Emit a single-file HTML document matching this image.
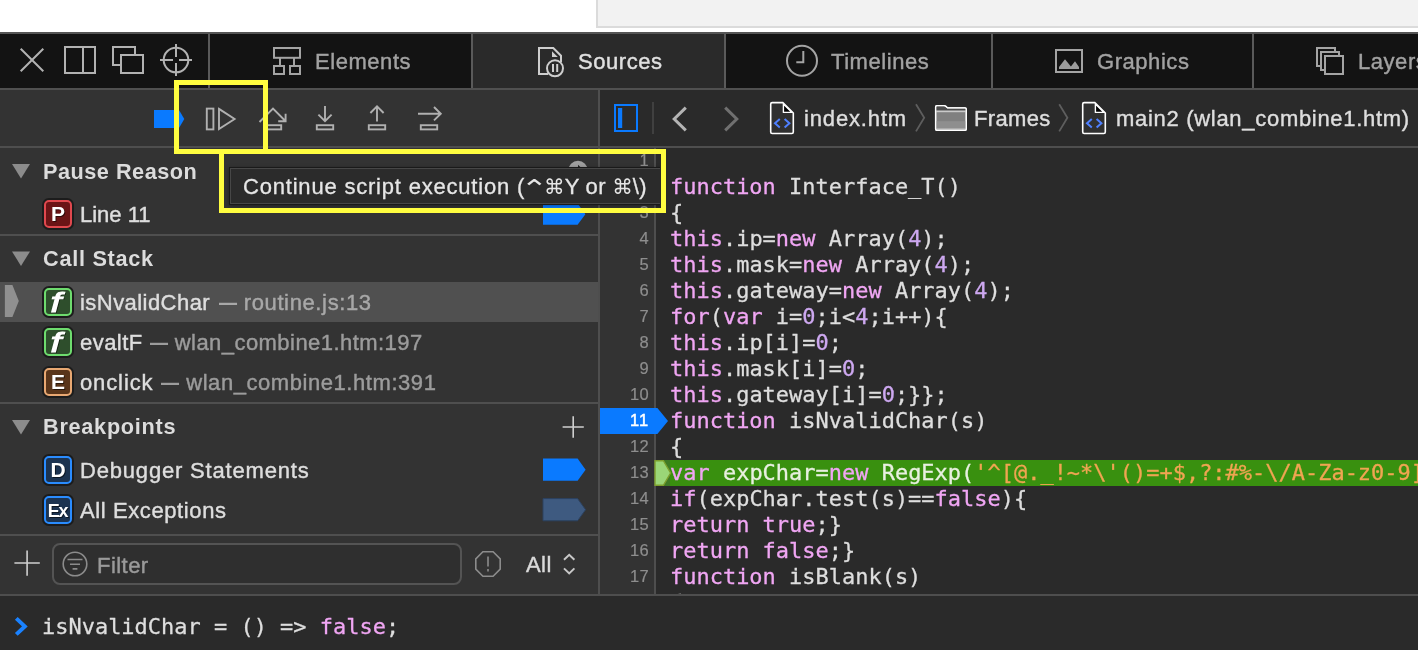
<!DOCTYPE html>
<html lang="en">
<head>
<meta charset="utf-8">
<title>Web Inspector</title>
<style>
html,body{margin:0;padding:0;}
body{width:1418px;height:650px;overflow:hidden;background:#fff;position:relative;font-family:"Liberation Sans",sans-serif;color:#dcdcdc;}
.abs{position:absolute;}
#topgray{left:596px;top:-2px;width:830px;height:26px;background:#f2f2f2;border:2px solid #dbdbdb;box-sizing:content-box;}
#dev{left:0;top:32px;width:1418px;height:618px;background:#333;}
#devtop{left:0;top:0;width:1418px;height:2px;background:#555;}
#tabbar{left:0;top:2px;width:1418px;height:54px;background:#131313;}
#tabline{left:0;top:56px;width:1418px;height:2px;background:#505050;}
.vdiv{top:0;width:2px;height:54px;background:#5a5a5a;}
.tabtxt{top:0;height:54px;line-height:56.8px;font-size:22px;color:#a2a2a2;letter-spacing:0.55px;-webkit-text-stroke:0.4px;white-space:nowrap;}
#srcTab{left:473px;top:0;width:252px;height:54px;background:#2a2a2a;}
svg{position:absolute;overflow:visible;}
.ic{fill:none;stroke:#b2b2b2;stroke-width:2;}
.tabtxt,.crumb,.hdr,.row,.ln,.code,#tip,.badge{will-change:transform;}
/* nav row */
#navL{left:0;top:58px;width:598px;height:56px;background:#333;}
#navR{left:600px;top:58px;width:818px;height:56px;background:#2a2a2a;}
#navline{left:0;top:114px;width:1418px;height:2px;background:#4e4e4e;}
#sidediv{left:598px;top:58px;width:2px;height:506px;background:#4e4e4e;}
.crumb{top:58px;height:56px;line-height:57px;font-size:22px;color:#dedede;letter-spacing:0.7px;-webkit-text-stroke:0.4px;white-space:nowrap;}
/* sidebar */
#side{left:0;top:116px;width:598px;height:446px;background:#333;}
.hdr{left:43px;font-weight:bold;font-size:21.7px;color:#dcdcdc;letter-spacing:0.72px;height:30px;line-height:31px;white-space:nowrap;}
.row{left:80px;font-size:22px;color:#dedede;letter-spacing:0.45px;-webkit-text-stroke:0.42px;height:40px;line-height:41.6px;white-space:nowrap;}
.row .sub{color:#9c9c9c;}
.row .d{display:inline-block;font-weight:bold;-webkit-text-stroke:0;width:18.4px;transform:scaleX(0.82);transform-origin:0 50%;margin-left:0.6px;}
.hline{left:0;width:598px;height:2px;background:#4f4f4f;}
.badge{left:44px;width:28px;height:28px;border-radius:5px;box-sizing:border-box;border:2px solid;box-shadow:0 0 0 2px #1c1c1c;text-align:center;color:#fff;font-weight:bold;font-size:21px;line-height:24px;letter-spacing:0;text-shadow:1px 1px 0 rgba(0,0,0,.55);}

.badge.bP{border-color:#e0484e;background:#6b1416;}
.badge.bF{border-color:#6edc6e;background:#2e4e2c;}
.badge.bE{border-color:#e8a872;background:#59351a;}
.badge.bD{border-color:#2a8cff;background:#1c3350;}
.badge i{font-size:26px;font-style:italic;font-weight:normal;-webkit-text-stroke:0.9px;display:inline-block;transform:translate(-1.6px,1px) scale(1.5,1.04);}
/* editor */
#gutter{left:600px;top:116px;width:55px;height:446px;background:#333;}
#gutline{left:654.2px;top:116px;width:1.8px;height:446px;background:#4e4e4e;}
#editor{left:656px;top:116px;width:762px;height:446px;background:#2a2a2a;}
.ln{left:600px;width:49px;text-align:right;font-size:16.5px;color:#8e8e8e;height:26px;line-height:25.8px;letter-spacing:0.3px;-webkit-text-stroke:0.2px;}
.code{left:671px;height:26px;line-height:25.4px;-webkit-text-stroke:0.3px;font-family:"DejaVu Sans Mono","Liberation Mono",monospace;font-size:21.95px;letter-spacing:0.02px;color:#dedede;white-space:pre;}
.k{color:#f0a6f3;}
.n{color:#cda8f0;}
.s{color:#f0a552;}

.ln.bp{color:#fff;-webkit-text-stroke:0.45px;letter-spacing:1.2px;width:49.5px;z-index:3;}
.w{color:#e8f0e0;}
#tip{left:229px;top:167px;width:440px;height:37.5px;box-sizing:border-box;border:1px solid #1a1a1a;background:#2b2b2b;box-shadow:inset 0 0 0 1px #474747,0 1px 4px rgba(0,0,0,.35);font-size:22px;line-height:37px;color:#e6e6e6;padding-left:13px;letter-spacing:0.62px;-webkit-text-stroke:0.3px;white-space:nowrap;overflow:hidden;}
#tip .t1{letter-spacing:0.8px;}
#tip .t2{letter-spacing:0.3px;}
#tip .sym{font-family:"DejaVu Sans",sans-serif;font-size:20.6px;letter-spacing:0;-webkit-text-stroke:0;}
#tip .ctl{display:inline-block;transform:translate(0px,2px) scale(1.5,1.12);transform-origin:50% 50%;margin:0 0.5px 0 0.5px;font-size:22px;}
.ybox{box-sizing:border-box;border:5.6px solid #fffd40;}
/* console */
#conline{left:0;top:562px;width:1418px;height:2px;background:#4e4e4e;}
#console{left:0;top:564px;width:1418px;height:54px;background:#2a2a2a;}
</style>
</head>
<body>
<div id="topgray" class="abs"></div>
<div id="dev" class="abs">
  <div id="devtop" class="abs"></div>
  <div id="tabbar" class="abs">
    <div id="srcTab" class="abs"></div>
    <div class="abs vdiv" style="left:208px"></div>
    <div class="abs vdiv" style="left:471px"></div>
    <div class="abs vdiv" style="left:724px"></div>
    <div class="abs vdiv" style="left:991px"></div>
    <div class="abs vdiv" style="left:1252px"></div>
    <div class="abs tabtxt" style="left:315px">Elements</div>
    <div class="abs tabtxt" style="left:578px;color:#e0e0e0">Sources</div>
    <div class="abs tabtxt" style="left:831px">Timelines</div>
    <div class="abs tabtxt" style="left:1097px">Graphics</div>
    <div class="abs tabtxt" style="left:1358px">Layers</div>
  </div>
  <div id="tabline" class="abs"></div>
  <div id="navL" class="abs"></div>
  <div id="navR" class="abs"></div>
  <div id="navline" class="abs"></div>
  <div class="abs crumb" style="left:804px;letter-spacing:0.85px">index.htm</div>
  <div class="abs crumb" style="left:973.5px;letter-spacing:0.35px">Frames</div>
  <div class="abs crumb" style="left:1116px">main2 (wlan_combine1.htm)</div>
  <div id="side" class="abs"></div>

  <!-- sidebar content -->
  <div class="abs" id="selrow" style="left:0;top:250px;width:598px;height:40px;background:#505050"></div>
  <div class="abs hline" style="top:202px"></div>
  <div class="abs hline" style="top:370px"></div>
  <div class="abs hline" style="top:502px"></div>
  <div class="abs hdr" style="top:124px;letter-spacing:0.5px">Pause Reason</div>
  <div class="abs hdr" style="top:211px">Call Stack</div>
  <div class="abs hdr" style="top:379px">Breakpoints</div>

  <div class="abs badge bP" style="top:168px">P</div>
  <div class="abs row" style="top:162px;letter-spacing:0px">Line 11</div>

  <div class="abs badge bF" style="top:256px"><i>f</i></div>
  <div class="abs row" style="top:250px">isNvalidChar <span class="sub" style="color:#a8a8a8;letter-spacing:0.63px;margin-left:1.3px"><b class="d">—</b> routine.js:13</span></div>
  <div class="abs badge bF" style="top:296px"><i>f</i></div>
  <div class="abs row" style="top:290px">evaltF <span class="sub"><b class="d">—</b> wlan_combine1.htm:197</span></div>
  <div class="abs badge bE" style="top:336px">E</div>
  <div class="abs row" style="top:330px"><span style="letter-spacing:0.88px">onclick</span> <span class="sub" style="letter-spacing:0.56px;margin-left:0.6px"><b class="d">—</b> wlan_combine1.htm:391</span></div>

  <div class="abs badge bD" style="top:424px">D</div>
  <div class="abs row" style="top:418px;letter-spacing:0.82px">Debugger Statements</div>
  <div class="abs badge bD" style="top:464px"><span style="letter-spacing:-1.2px;font-size:18px;margin-left:-1px">Ex</span></div>
  <div class="abs row" style="top:458px;letter-spacing:0.6px">All Exceptions</div>

  <div class="abs" id="filter" style="left:52px;top:511px;width:410px;height:42px;box-sizing:border-box;border:2px solid #545454;border-radius:8px;background:#2f2f2f"></div>
  <div class="abs row" style="left:97px;top:513px;color:#9a9a9a">Filter</div>
  <div class="abs row" style="left:526px;top:511.5px;color:#dadada">All</div>
  <div id="gutter" class="abs"></div>
  <div id="gutline" class="abs"></div>
  <div id="editor" class="abs"></div>
  <div id="edwrap" class="abs" style="left:600px;top:116px;width:818px;height:446px;overflow:hidden">
   <div class="abs" style="left:55px;top:312px;width:16px;height:26px;background:#3f7a24"></div>
   <div class="abs" style="left:70px;top:312px;width:748px;height:26px;background:#39900f"></div>
   <div class="abs ln" style="left:0;top:0px">1</div>
   <div class="abs ln" style="left:0;top:26px">2</div>
   <div class="abs code" style="left:70.2px;top:26px"><span class="k">function</span> Interface_T()</div>
   <div class="abs ln" style="left:0;top:52px">3</div>
   <div class="abs code" style="left:70.2px;top:52px">{</div>
   <div class="abs ln" style="left:0;top:78px">4</div>
   <div class="abs code" style="left:70.2px;top:78px"><span class="k">this</span>.ip=<span class="k">new</span> Array(<span class="n">4</span>);</div>
   <div class="abs ln" style="left:0;top:104px">5</div>
   <div class="abs code" style="left:70.2px;top:104px"><span class="k">this</span>.mask=<span class="k">new</span> Array(<span class="n">4</span>);</div>
   <div class="abs ln" style="left:0;top:130px">6</div>
   <div class="abs code" style="left:70.2px;top:130px"><span class="k">this</span>.gateway=<span class="k">new</span> Array(<span class="n">4</span>);</div>
   <div class="abs ln" style="left:0;top:156px">7</div>
   <div class="abs code" style="left:70.2px;top:156px"><span class="k">for</span>(<span class="k">var</span> i=<span class="n">0</span>;i&lt;<span class="n">4</span>;i++){</div>
   <div class="abs ln" style="left:0;top:182px">8</div>
   <div class="abs code" style="left:70.2px;top:182px"><span class="k">this</span>.ip[i]=<span class="n">0</span>;</div>
   <div class="abs ln" style="left:0;top:208px">9</div>
   <div class="abs code" style="left:70.2px;top:208px"><span class="k">this</span>.mask[i]=<span class="n">0</span>;</div>
   <div class="abs ln" style="left:0;top:234px">10</div>
   <div class="abs code" style="left:70.2px;top:234px"><span class="k">this</span>.gateway[i]=<span class="n">0</span>;}};</div>
   <div class="abs ln bp" style="left:0;top:260px">11</div>
   <div class="abs code" style="left:70.2px;top:260px"><span class="k">function</span> isNvalidChar(s)</div>
   <div class="abs ln" style="left:0;top:286px">12</div>
   <div class="abs code" style="left:70.2px;top:286px">{</div>
   <div class="abs ln" style="left:0;top:312px">13</div>
   <div class="abs code" style="left:70.2px;top:312px"><span class="k">var</span> <span class="w">expChar=</span><span class="k">new</span> <span class="w">RegExp(</span><span class="s">'^[@._!~*\'()=+$,?:#%-\/A-Za-z0-9]+$'</span><span class="w">);</span></div>
   <div class="abs ln" style="left:0;top:338px">14</div>
   <div class="abs code" style="left:70.2px;top:338px"><span class="k">if</span>(expChar.test(s)==<span class="k">false</span>){</div>
   <div class="abs ln" style="left:0;top:364px">15</div>
   <div class="abs code" style="left:70.2px;top:364px"><span class="k">return</span> <span class="k">true</span>;}</div>
   <div class="abs ln" style="left:0;top:390px">16</div>
   <div class="abs code" style="left:70.2px;top:390px"><span class="k">return</span> <span class="k">false</span>;}</div>
   <div class="abs ln" style="left:0;top:416px">17</div>
   <div class="abs code" style="left:70.2px;top:416px"><span class="k">function</span> isBlank(s)</div>
   <div class="abs ln" style="left:0;top:442px">18</div>
   <div class="abs code" style="left:70.2px;top:442px">{</div>
  </div>
  <div id="sidediv" class="abs"></div>
  <div id="conline" class="abs"></div>
  <div id="console" class="abs"></div>
  <div class="abs code" style="left:42px;top:581.9px">isNvalidChar = () =&gt; <span class="k">false</span>;</div>
</div>
<svg id="icons" class="abs" style="left:0;top:0" width="1418" height="650" viewBox="0 0 1418 650">
 <!-- close / dock / detach / inspect -->
 <g class="ic" stroke="#b2b2b2">
  <path d="M20.7 48.7 L43.3 71.3 M43.3 48.7 L20.7 71.3"/>
  <rect x="65" y="47" width="30" height="26"/><path d="M83 47 V73"/>
  <path d="M135 54 V47 H113 V65 H120"/><rect x="121" y="55" width="22" height="18"/>
  <circle cx="176" cy="60" r="12.3"/><path d="M160 60 H173 M179 60 H192 M176 44 V57 M176 63 V76"/>
 </g>
 <!-- Elements -->
 <g class="ic" style="stroke:#a4a4a4">
  <rect x="274" y="48" width="26" height="9.8"/><rect x="274" y="66" width="10" height="8"/><rect x="290" y="66" width="10" height="8"/>
  <path d="M280 58 V66 M294 58 V66"/>
 </g>
 <!-- Sources -->
 <g class="ic" style="stroke:#cecece">
  <path d="M548 74 H539 V48 H553.3 L561 55.7 V62"/>
  <path d="M552 51.2 V57 H557.8 Z" fill="#cecece" stroke="none"/>
  <circle cx="555" cy="68.3" r="8" fill="#2a2a2a"/>
  <path d="M553 64 V72 M557.2 64 V72"/>
 </g>
 <!-- Timelines -->
 <g class="ic" style="stroke:#a4a4a4">
  <circle cx="802" cy="60.8" r="15"/><path d="M803.3 51 V62.3 H796.3"/>
 </g>
 <!-- Graphics -->
 <g class="ic" style="stroke:#a4a4a4">
  <rect x="1056" y="50" width="26" height="22"/>
  <path d="M1059 69 V67 L1065 59.2 L1070.9 66.6 L1075 61.2 L1079 67 V69 Z" fill="#9c9c9c" stroke="none"/>
 </g>
 <!-- Layers -->
 <g class="ic" style="stroke:#a4a4a4;fill:#131313">
  <rect x="1317" y="48" width="18" height="18"/><rect x="1321" y="52" width="18" height="18"/><rect x="1325" y="56" width="18" height="18"/>
 </g>

 <!-- debugger controls -->
 <path d="M154 110 H179 L184.3 119 L179 128 H154 Z" fill="#0a7aff"/>
 <g fill="none" stroke="#b0b0b0" stroke-width="1.9">
  <rect x="206.8" y="108.6" width="6.6" height="20.8"/>
  <path d="M219 108.9 L234.6 119 L219 129.1 Z"/>
  <path d="M259.5 122 L273 108.6 L285.4 121 M278.2 121.2 H285.6 V113.8"/>
  <rect x="264.8" y="125.2" width="16.4" height="4.2"/>
  <path d="M325 106 V121 M318.4 114.6 L325 121.2 L331.6 114.6"/>
  <rect x="316.8" y="125.2" width="16.4" height="4.2"/>
  <path d="M377 121.5 V106.6 M370.4 113 L377 106.4 L383.6 113"/>
  <rect x="368.8" y="125.2" width="16.4" height="4.2"/>
  <path d="M418 113.7 H440.6 M434 107 L440.8 113.7 L434 120.4"/>
  <rect x="420.8" y="125.2" width="16.4" height="4.2"/>
 </g>
 <!-- sidebar toggle -->
 <rect x="615" y="105" width="22" height="26" fill="none" stroke="#0a7aff" stroke-width="2"/>
 <rect x="618" y="108" width="4.2" height="20" fill="#0a7aff"/>
 <path d="M653 102 V134" stroke="#484848" stroke-width="1.5" fill="none"/>
 <path d="M685.8 107.6 L674.2 119 L685.8 130.4" fill="none" stroke="#b4b4b4" stroke-width="3"/>
 <path d="M725.2 107.6 L736.8 119 L725.2 130.4" fill="none" stroke="#707070" stroke-width="3"/>
 <!-- file icon 1 -->
 <g id="fileic">
  <path d="M772.2 102.6 H782.8 L793.3 113 V132 Q793.3 133.5 791.8 133.5 H772.2 Q770.7 133.5 770.7 132 V104.1 Q770.7 102.6 772.2 102.6 Z" fill="#303030" stroke="#fff" stroke-width="1.6"/>
  <path d="M783.4 104 V112.4 H792 Z" fill="#000" stroke="#fff" stroke-width="1.4" stroke-linejoin="round"/>
  <path d="M779.8 119 L775 123.2 L779.8 127.4 M784.6 119 L789.4 123.2 L784.6 127.4" fill="none" stroke="#4f80ff" stroke-width="2"/>
 </g>
 <use href="#fileic" x="312" y="0"/>
 <!-- chevrons -->
 <path d="M916 104.2 L924.2 117.8 L916 131.4" fill="none" stroke="#5e5e5e" stroke-width="1.8"/>
 <path d="M1059.2 104.2 L1067.4 117.8 L1059.2 131.4" fill="none" stroke="#5e5e5e" stroke-width="1.8"/>
 <!-- folder -->
 <g>
  <path d="M937 105.6 H944 Q945 105.6 945.8 106.3 L947.6 107.9 H965 Q966.3 107.9 966.3 109.2 V129 Q966.3 130.3 965 130.3 H937 Q935.6 130.3 935.6 129 V107 Q935.6 105.6 937 105.6 Z" fill="#808080" stroke="#fff" stroke-width="1.3"/>
  <path d="M936.3 106.3 H944.6 L947.3 108.6 H965.6 V110.6 H936.3 Z" fill="#4c4c4c"/>
  <rect x="936.3" y="110.6" width="29.3" height="1.6" fill="#cacaca"/>
  <rect x="936.3" y="121.2" width="29.3" height="7.4" fill="#8e8e8e"/>
  <rect x="936.3" y="128.4" width="29.3" height="1.4" fill="#c2c2c2"/>
  <path d="M937 105.6 H944 Q945 105.6 945.8 106.3 L947.6 107.9 H965 Q966.3 107.9 966.3 109.2 V129 Q966.3 130.3 965 130.3 H937 Q935.6 130.3 935.6 129 V107 Q935.6 105.6 937 105.6 Z" fill="none" stroke="#fff" stroke-width="1.3"/>
 </g>

 <!-- sidebar glyphs -->
 <g fill="#8c8c8c">
  <path d="M12 164 H30 L21 178.6 Z"/><path d="M12 251.4 H30 L21 266 Z"/><path d="M12 420 H30 L21 434.6 Z"/>
 </g>
 <path d="M4.9 285 H12.4 L18.8 301 L12.4 317 H4.9 Z" fill="#909090"/>
 <path d="M543 203.6 H577.6 L585.4 214.2 L577.6 224.8 H543 Z" fill="#0a7aff"/>
 <path d="M543 458.6 H577.6 L585.6 469.7 L577.6 480.8 H543 Z" fill="#0a7aff"/>
 <path d="M543 498.6 H577.6 L585.6 509.7 L577.6 520.8 H543 Z" fill="#3e5a80" stroke="#2c4260" stroke-width="1"/>
 <path d="M562.6 427 H583.8 M573.2 416.2 V437.8" stroke="#cfcfcf" stroke-width="1.6" fill="none"/>
 <path d="M14.4 563 H39.8 M27.1 550.4 V575.7" stroke="#cfcfcf" stroke-width="1.6" fill="none"/>
 <g fill="none" stroke="#8c8c8c" stroke-width="1.6">
  <circle cx="75" cy="564" r="11.8"/>
  <path d="M67.5 559.5 H82.5 M70 564.2 H80 M72.6 568.9 H77.4"/>
  <path d="M482.9 551.8 H493.1 L500.2 558.9 V569.1 L493.1 576.2 H482.9 L475.8 569.1 V558.9 Z"/>
  <path d="M488 556.5 V566.5 M488 569 V571.4"/>
 </g>
 <path d="M564 559.8 L569.2 554.8 L574.4 559.8 M564 568.4 L569.2 573.4 L574.4 568.4" fill="none" stroke="#c8c8c8" stroke-width="2"/>

 <!-- editor markers -->
 <path d="M600 408 H657.4 L668 421 L657.4 434 H600 Z" fill="#0a7aff"/>
 <path d="M655 460.7 H663.4 L670.6 473 L663.4 485.3 H655 Z" fill="#9bd677" stroke="#7d9f2d" stroke-width="1.4"/>
 <path d="M16.3 618.4 L24.8 626.4 L16.3 634.4" fill="none" stroke="#1a82ff" stroke-width="4"/>
 <!-- hidden go-to arrow button peeking above tooltip -->
 <circle cx="578" cy="170.6" r="9.8" fill="#a0a0a0"/>
 <path d="M578 164.8 L580.8 167.4 H578 Z" fill="#222"/>
</svg>
<div id="tipclip" class="abs" style="left:224px;top:154px;width:436px;height:54px;overflow:hidden">
 <div id="tip" class="abs" style="left:5px;top:13.3px"><span class="t1">Continue script execution </span><span class="t2">(<span class="sym ctl">⌃</span><span class="sym">⌘</span>Y or <span class="sym">⌘</span>\)</span></div>
</div>
<div class="abs ybox" style="left:174px;top:80.4px;width:93.5px;height:73.3px"></div>
<div class="abs ybox" style="left:219px;top:148.5px;width:446.8px;height:64.4px"></div>
</body>
</html>
